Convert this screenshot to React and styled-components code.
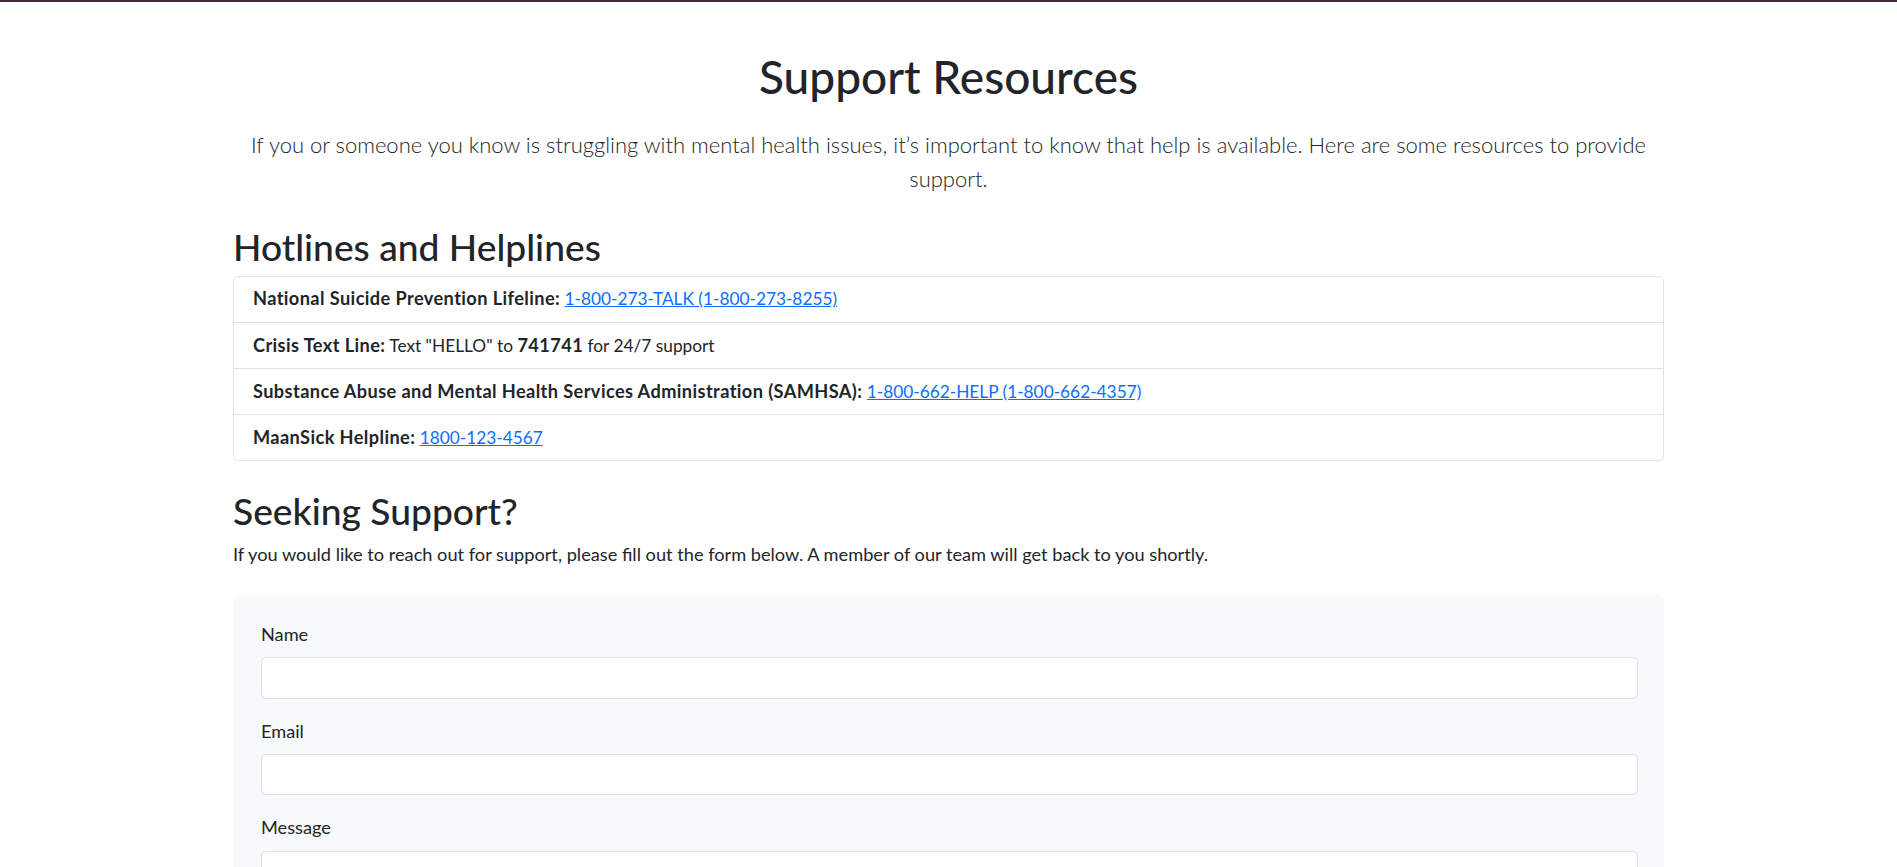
import React from 'react';
import styled, { createGlobalStyle } from 'styled-components';

const HOTLINES = [
  {
    name: 'National Suicide Prevention Lifeline:',
    link: '1-800-273-TALK (1-800-273-8255)',
  },
  {
    name: 'Crisis Text Line:',
    text: true,
  },
  {
    name: 'Substance Abuse and Mental Health Services Administration (SAMHSA):',
    link: '1-800-662-HELP (1-800-662-4357)',
  },
  {
    name: 'MaanSick Helpline:',
    link: '1800-123-4567',
  },
];

const GlobalStyle = createGlobalStyle`
  * {
    box-sizing: border-box;
  }
  body {
    margin: 0;
    background: #fff;
    color: #212529;
    font-family: Lato, "Noto Sans", sans-serif;
    font-size: 18.2px;
    line-height: 26.4px;
  }
`;

const App = () => {
  const handleSubmit = (e) => {
    e.preventDefault();
  };

  return (
    <>
      <GlobalStyle />
      <TopBar />
      <Container>
        <Title>Support Resources</Title>
        <Lead>
          If you or someone you know is struggling with mental health issues, it’s
          important to know that help is available. Here are some resources to
          provide support.
        </Lead>

        <SectionTitle>Hotlines and Helplines</SectionTitle>
        <List>
          {HOTLINES.map((item) => (
            <Item key={item.name}>
              <Strong>{item.name}</Strong>{' '}
              {item.text ? (
                <>
                  Text "HELLO" to <Strong>741741</Strong> for 24/7 support
                </>
              ) : (
                <Link href="#">{item.link}</Link>
              )}
            </Item>
          ))}
        </List>

        <SectionTitle $tight>Seeking Support?</SectionTitle>
        <Text>
          If you would like to reach out for support, please fill out the form
          below. A member of our team will get back to you shortly.
        </Text>

        <FormCard onSubmit={handleSubmit}>
          <Field>
            <Label htmlFor="name">Name</Label>
            <Input id="name" type="text" />
          </Field>
          <Field>
            <Label htmlFor="email">Email</Label>
            <Input id="email" type="email" />
          </Field>
          <Field>
            <Label htmlFor="message">Message</Label>
            <TextArea id="message" rows={4} />
          </Field>
          <Button type="submit">Submit</Button>
        </FormCard>
      </Container>
    </>
  );
};

export default App;

const TopBar = styled.div`
  height: 2px;
  background-color: #3e2c3c;
`;

const Container = styled.main`
  max-width: 1431px;
  margin: 0 auto;
  padding: 49px 0 40px;
`;

const Title = styled.h1`
  margin: 0 0 24px;
  font-size: 46px;
  font-weight: 500;
  line-height: 52.8px;
  text-align: center;
`;

const Lead = styled.p`
  margin: 0 auto 30px;
  max-width: 1400px;
  font-size: 22px;
  font-weight: 300;
  line-height: 34px;
  text-align: center;
`;

const SectionTitle = styled.h2`
  margin: 0 0 ${({ $tight }) => ($tight ? '9px' : '8px')};
  font-size: 37.2px;
  font-weight: 500;
  line-height: 42.2px;
`;

const List = styled.ul`
  margin: 0 0 29px;
  padding: 0;
  list-style: none;
  border: 1px solid #dee2e6;
  border-radius: 5px;
`;

const Item = styled.li`
  height: 46px;
  padding: 9px 19px 0;
  font-size: 17.3px;
  white-space: nowrap;
  overflow: hidden;
  border-top: 1px solid #dee2e6;
  &:first-child {
    height: 45px;
    border-top: 0;
    padding-top: 8px;
  }
`;

const Strong = styled.strong`
  font-size: 18.2px;
  font-weight: 700;
  letter-spacing: 0.4px;
`;

const Link = styled.a`
  color: #0d6efd;
  text-decoration: underline;
`;

const Text = styled.p`
  margin: 0 0 27px;
`;

const FormCard = styled.form`
  padding: 26px 26px 26px 28px;
  background-color: #f8f9fa;
  border-radius: 7px;
`;

const Field = styled.div`
  margin-bottom: 19px;
`;

const Label = styled.label`
  display: block;
  margin-bottom: 10px;
  line-height: 26.4px;
`;

const Input = styled.input`
  display: block;
  width: 100%;
  height: 41.5px;
  padding: 6.6px 13.2px;
  font: inherit;
  color: #212529;
  background-color: #fff;
  border: 1px solid #dee2e6;
  border-radius: 5px;
`;

const TextArea = styled.textarea`
  display: block;
  width: 100%;
  padding: 6.6px 13.2px;
  font: inherit;
  color: #212529;
  background-color: #fff;
  border: 1px solid #dee2e6;
  border-radius: 5px;
  resize: vertical;
`;

const Button = styled.button`
  padding: 6.6px 13.2px;
  font: inherit;
  color: #fff;
  background-color: #0d6efd;
  border: 1px solid #0d6efd;
  border-radius: 5px;
  cursor: pointer;
`;
